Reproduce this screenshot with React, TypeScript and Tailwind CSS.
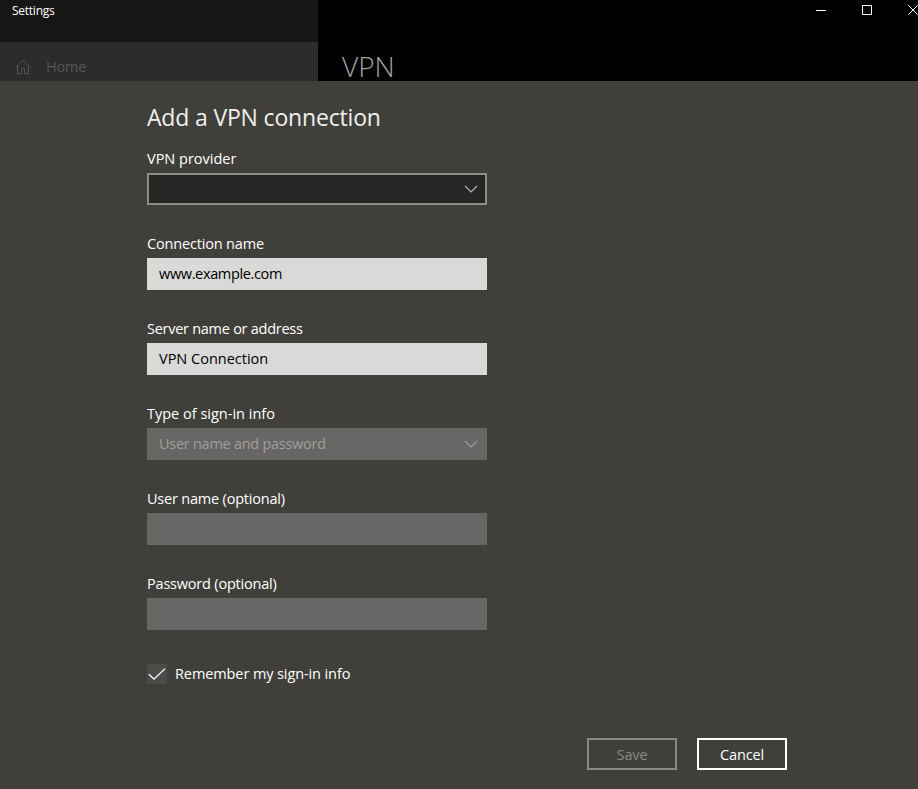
import type { ReactNode } from "react";

function Chevron({ className }: { className: string }) {
  return (
    <svg className={`h-2 w-3.5 ${className}`} viewBox="0 0 14 8" fill="none" stroke="currentColor" strokeWidth="1.1">
      <path d="M1 1l6 6 6-6" />
    </svg>
  );
}

function Field({ label, children }: { label: ReactNode; children: ReactNode }) {
  return (
    <div className="flex w-[340px] flex-col gap-1">
      <label className="h-5 whitespace-nowrap text-[14.5px] leading-5">{label}</label>
      {children}
    </div>
  );
}

export default function App() {
  return (
    <div className="flex h-[789px] w-[918px] flex-col overflow-hidden bg-black font-['Open_Sans','Noto_Sans',sans-serif] text-white">
      <header className="flex h-[81px] shrink-0">
        <div className="flex w-[318px] flex-col bg-[#161616]">
          <div className="h-[42px] pl-3 text-[12px] leading-[22px]"><span className="tracking-[-0.25px]">Settings</span></div>
          <div className="flex flex-1 items-center bg-[#2c2c2c] pt-[11px] pl-[15px] text-[#565656]">
            <svg className="h-4 w-4" viewBox="0 0 16 16" fill="none" stroke="currentColor" strokeWidth="1">
              <path d="M1 8.2L8 1.5l7 6.7M2.5 7v7.5h4V9.5h3v5h4V7" />
            </svg>
            <span className="ml-[15px] text-[14.5px] leading-5 tracking-[-0.2px]">Home</span>
          </div>
        </div>
        <div className="flex flex-1 flex-col">
          <div className="flex h-[42px] shrink-0 justify-end">
            <svg className="h-5 w-[102px] text-white" viewBox="0 0 102 20" fill="none" stroke="currentColor" strokeWidth="1">
              <path d="M0 10.5h10M46.5 5.5h9v9h-9zM92.3 5.3l9.4 9.4M101.7 5.3l-9.4 9.4" />
            </svg>
          </div>
          <h1 className="h-[39px] pl-[24px] pt-[6px] text-[28px] font-light leading-9 text-[#a0a0a0]">VPN</h1>
        </div>
      </header>

      <main className="flex flex-1 flex-col bg-[#413f3b] pl-[147px] pr-[131px] pt-[18px]">
        <h2 className="h-9 text-[23px] leading-9 tracking-[-0.17px] text-[#f0f0ef]">Add a VPN connection</h2>
        <form className="mt-[14px] flex flex-col gap-[29px]">
          <Field label={<span>VPN provider</span>}>
            <div className="flex h-8 items-center justify-end border-2 border-[#8d8c8a] bg-[#272624] pr-[7px]">
              <Chevron className="text-[#b9b9b7]" />
            </div>
          </Field>
          <Field label={<span className="tracking-[-0.17px]">Connection name</span>}>
            <div className="h-8 bg-[#d9d9d7] pl-3 text-[14.5px] leading-8 text-black"><span className="tracking-[-0.35px]">www.example.com</span></div>
          </Field>
          <Field label={<span className="tracking-[-0.27px]">Server name or address</span>}>
            <div className="h-8 bg-[#d9d9d7] pl-3 text-[14.5px] leading-8 text-black"><span>VPN Connection</span></div>
          </Field>
          <Field label={<span>Type of sign-in info</span>}>
            <div className="flex h-8 items-center justify-between bg-[#676664] pl-3 pr-[9px] text-[14.5px] leading-8 text-[#a09f9d]">
              <span className="tracking-[-0.27px]">User name and password</span>
              <Chevron className="text-[#a09f9d]" />
            </div>
          </Field>
          <Field label={<span className="tracking-[-0.2px]">User name (optional)</span>}>
            <div className="h-8 bg-[#676664]" />
          </Field>
          <Field label={<span className="tracking-[-0.2px]">Password (optional)</span>}>
            <div className="h-8 bg-[#676664]" />
          </Field>
        </form>
        <label className="mt-[34px] flex h-5 items-center gap-2 text-[14.5px] leading-5">
          <span className="flex h-5 w-5 items-center justify-center bg-[#4c4b4a]">
            <svg className="h-5 w-5" viewBox="0 0 20 20" fill="none" stroke="currentColor" strokeWidth="1.3">
              <path d="M2 10.2l5 5L18 4.6" />
            </svg>
          </span>
          <span className="tracking-[-0.1px]">Remember my sign-in info</span>
        </label>
        <div className="mt-[54px] flex justify-end gap-5 text-[14.5px] tracking-[-0.15px]">
          <button className="h-8 w-[90px] border-2 border-[#8a8986] pt-0.5 text-[#8a8986]">Save</button>
          <button className="h-8 w-[90px] border-2 border-white pt-0.5">Cancel</button>
        </div>
      </main>
    </div>
  );
}
